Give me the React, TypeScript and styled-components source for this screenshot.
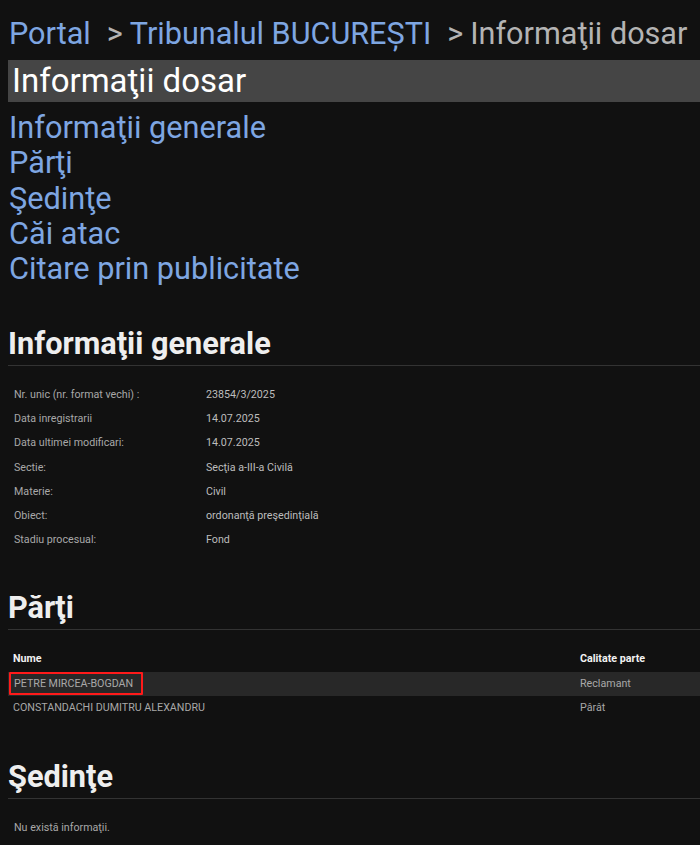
import React from "react";
import styled, { createGlobalStyle } from "styled-components";

const GlobalStyle = createGlobalStyle`
  html, body {
    margin: 0;
    padding: 0;
    background: #111111;
  }
  body {
    font-family: Roboto, "Noto Sans", "Liberation Sans", sans-serif;
    color: #dddddd;
  }
`;

const Page = styled.div`
  padding: 16px 0 20px 8px;
`;

const Breadcrumb = styled.div`
  display: flex;
  align-items: baseline;
  font-size: 30.6px;
  line-height: 36px;
  padding-left: 1px;
  white-space: nowrap;
`;

const Crumb = styled.span<{ $current?: boolean }>`
  color: ${p => (p.$current ? "#b4b4b4" : "#7ea6e2")};
`;

const Sep = styled.span`
  color: #b4b4b4;
  margin: 0 7px 0 16px;
`;

const TitleBar = styled.div`
  margin-top: 8px;
  background: #454545;
  color: #ffffff;
  font-size: 33px;
  line-height: 42px;
  padding-left: 4px;
`;

const NavList = styled.nav`
  display: flex;
  flex-direction: column;
  margin-top: 8px;
  padding-left: 1px;
`;

const NavLink = styled.a`
  color: #7ea6e2;
  font-size: 30.7px;
  line-height: 35.3px;
  text-decoration: none;
`;

const Section = styled.section<{ $top: number }>`
  margin-top: ${p => p.$top}px;
`;

const SectionTitle = styled.h2`
  margin: 0;
  font-size: 30.7px;
  font-weight: 700;
  line-height: 36px;
  color: #eeeeee;
  padding-bottom: 3px;
  border-bottom: 1px solid #333333;
`;

const InfoGrid = styled.div`
  display: grid;
  grid-template-columns: 192px 1fr;
  grid-auto-rows: 24.2px;
  padding: 16px 0 0 6px;
  font-size: 10.7px;
  align-items: center;
`;

const InfoLabel = styled.div`
  color: #a8a8a8;
`;

const InfoValue = styled.div`
  color: #bdbdbd;
`;

const Table = styled.div`
  display: flex;
  flex-direction: column;
  margin-top: 16px;
  font-size: 10.7px;
`;

const Row = styled.div<{ $shade?: boolean; $head?: boolean }>`
  display: grid;
  grid-template-columns: 567px 1fr;
  height: ${p => (p.$head ? "26px" : "24px")};
  align-items: center;
  background: ${p => (p.$shade ? "#282828" : "transparent")};
  color: ${p => (p.$head ? "#f2f2f2" : "#a8a8a8")};
  font-weight: ${p => (p.$head ? 700 : 400)};
`;

const Cell = styled.div`
  padding-left: 5px;
  white-space: nowrap;
`;

const Marked = styled.span`
  display: inline-block;
  margin-left: -4px;
  padding: 3px 8px 3px 3px;
  border: 2px solid #ff1a1a;
  border-radius: 1px;
  line-height: 13px;
`;

const Empty = styled.div`
  padding: 22px 0 0 6px;
  font-size: 10.7px;
  color: #a8a8a8;
`;

const info: [string, string][] = [
  ["Nr. unic (nr. format vechi) :", "23854/3/2025"],
  ["Data inregistrarii", "14.07.2025"],
  ["Data ultimei modificari:", "14.07.2025"],
  ["Sectie:", "Secţia a-III-a Civilă"],
  ["Materie:", "Civil"],
  ["Obiect:", "ordonanţă preşedinţială"],
  ["Stadiu procesual:", "Fond"],
];

const parti = [
  { nume: "PETRE MIRCEA-BOGDAN", calitate: "Reclamant", marked: true },
  { nume: "CONSTANDACHI DUMITRU ALEXANDRU", calitate: "Pârât", marked: false },
];

const links = [
  "Informaţii generale",
  "Părţi",
  "Şedinţe",
  "Căi atac",
  "Citare prin publicitate",
];

export default function App() {
  return (
    <>
      <GlobalStyle />
      <Page>
        <Breadcrumb>
          <Crumb>Portal</Crumb>
          <Sep>&gt;</Sep>
          <Crumb>Tribunalul BUCUREȘTI</Crumb>
          <Sep>&gt;</Sep>
          <Crumb $current>Informaţii dosar</Crumb>
        </Breadcrumb>
        <TitleBar>Informaţii dosar</TitleBar>
        <NavList>
          {links.map(l => (
            <NavLink key={l} href="#">
              {l}
            </NavLink>
          ))}
        </NavList>

        <Section $top={40}>
          <SectionTitle>Informaţii generale</SectionTitle>
          <InfoGrid>
            {info.map(([k, v]) => (
              <React.Fragment key={k}>
                <InfoLabel>{k}</InfoLabel>
                <InfoValue>{v}</InfoValue>
              </React.Fragment>
            ))}
          </InfoGrid>
        </Section>

        <Section $top={38}>
          <SectionTitle>Părţi</SectionTitle>
          <Table>
            <Row $head>
              <Cell>Nume</Cell>
              <Cell>Calitate parte</Cell>
            </Row>
            {parti.map((p, i) => (
              <Row key={p.nume} $shade={i === 0}>
                <Cell>{p.marked ? <Marked>{p.nume}</Marked> : p.nume}</Cell>
                <Cell>{p.calitate}</Cell>
              </Row>
            ))}
          </Table>
        </Section>

        <Section $top={39}>
          <SectionTitle>Şedinţe</SectionTitle>
          <Empty>Nu există informaţii.</Empty>
        </Section>
      </Page>
    </>
  );
}
